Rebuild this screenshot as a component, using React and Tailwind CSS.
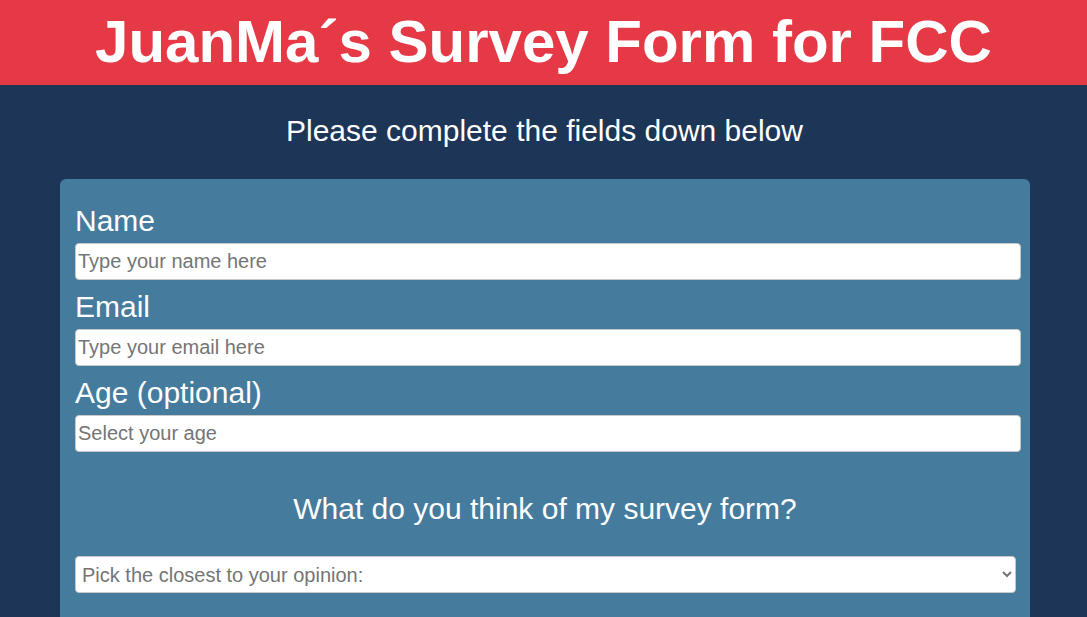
import React from "react";

function Field({ label, id, placeholder, type = "text" }) {
  return (
    <div className="flex flex-col">
      <label htmlFor={id} className="text-[30px] leading-[34px] text-white mb-[5px]">
        {label}
      </label>
      <input
        id={id}
        type={type}
        placeholder={placeholder}
        className="w-[946px] h-[37px] bg-white border border-[#c8c8c8] rounded-[4px] px-[2px] text-[20px] text-black placeholder:text-[#757575] mb-[10px]"
      />
    </div>
  );
}

export default function App() {
  return (
    <div
      className="min-h-screen bg-[#1d3557]"
      style={{ fontFamily: '"Liberation Sans", Arial, sans-serif' }}
    >
      {/* Header */}
      <header className="h-[85px] bg-[#e63946] flex items-center justify-center pb-[3px]">
        <h1 className="text-[60px] leading-[69px] font-bold text-white">
          JuanMa´s Survey Form for FCC
        </h1>
      </header>

      <p className="text-center text-white text-[30px] leading-[34px] mt-[29px] mb-[31px] pl-[2px]">
        Please complete the fields down below
      </p>

      {/* Survey card */}
      <form className="ml-[60px] w-[970px] bg-[#457b9d] rounded-t-[6px] pt-[25px] pl-[15px] pb-[40px]">
        <Field label="Name" id="name" placeholder="Type your name here" />
        <Field label="Email" id="email" type="email" placeholder="Type your email here" />
        <Field label="Age (optional)" id="age" type="number" placeholder="Select your age" />

        <p className="text-center text-white text-[30px] leading-[34px] mt-[30px] mb-[30px] pr-[15px]">
          What do you think of my survey form?
        </p>

        <select
          defaultValue=""
          className="w-[941px] h-[37px] bg-white border border-[#c8c8c8] rounded-[4px] pl-[2px] text-[20px] text-[#757575]"
        >
          <option value="" disabled>
            Pick the closest to your opinion:
          </option>
          <option value="great">It's great!</option>
          <option value="good">It's good</option>
          <option value="improve">Could be improved</option>
        </select>
      </form>
    </div>
  );
}
